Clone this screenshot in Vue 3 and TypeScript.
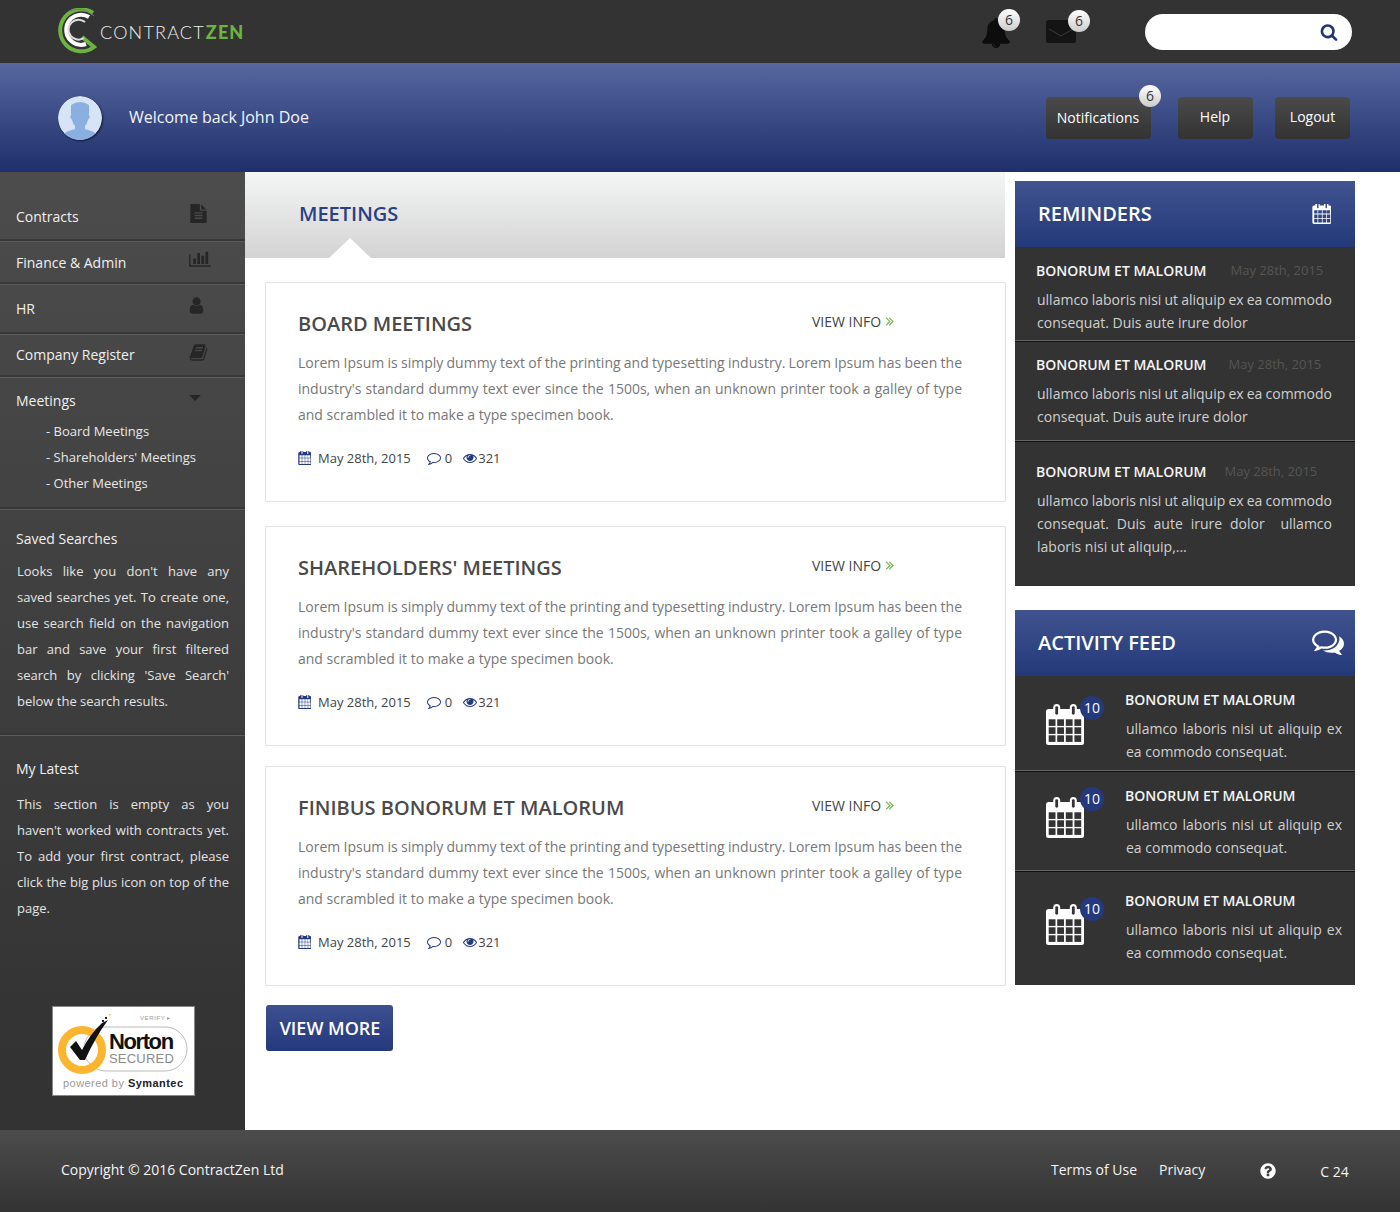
<script setup lang="ts">
const P = {
  cal: { vb: '0 128 1664 1664', d: 'M192 1664h288v-288h-288v288zm352 0h320v-288h-320v288zm-352-352h288v-320h-288v320zm352 0h320v-320h-320v320zm-352-384h288v-288h-288v288zm736 736h320v-288h-320v288zm-384-736h320v-288h-320v288zm768 736h288v-288h-288v288zm-384-352h320v-320h-320v320zm-352-864v-288q0-13-9.5-22.5t-22.5-9.5h-64q-13 0-22.5 9.5t-9.5 22.5v288q0 13 9.5 22.5t22.5 9.5h64q13 0 22.5-9.5t9.5-22.5zm736 864h288v-320h-288v320zm-384-384h320v-288h-320v288zm352 0h288v-288h-288v288zm32-480v-288q0-13-9.5-22.5t-22.5-9.5h-64q-13 0-22.5 9.5t-9.5 22.5v288q0 13 9.5 22.5t22.5 9.5h64q13 0 22.5-9.5t9.5-22.5zm384-64v1280q0 52-38 90t-90 38h-1408q-52 0-90-38t-38-90v-1280q0-52 38-90t90-38h128v-96q0-66 47-113t113-47h64q66 0 113 47t47 113v96h384v-96q0-66 47-113t113-47h64q66 0 113 47t47 113v96h128q52 0 90 38t38 90z' },
  search: { vb: '0 0 1792 1792', d: 'M1216 832q0-185-131.5-316.5t-316.5-131.5-316.5 131.5-131.5 316.5 131.5 316.5 316.5 131.5 316.5-131.5 131.5-316.5zm512 832q0 52-38 90t-90 38q-54 0-90-38l-343-342q-179 124-399 124-143 0-273.5-55.5t-225-150-150-225-55.5-273.5 55.5-273.5 150-225 225-150 273.5-55.5 273.5 55.5 225 150 150 225 55.5 273.5q0 220-124 399l343 343q37 37 37 90z' },
  bell: { vb: '0 0 1792 1792', d: 'M912 1696q0-16-16-16-59 0-101.5-42.5t-42.5-101.5q0-16-16-16t-16 16q0 73 51.5 124.5t124.5 51.5q16 0 16-16zm816-288q0 52-38 90t-90 38h-448q0 106-75 181t-181 75-181-75-75-181h-448q-52 0-90-38t-38-90q50-42 91-88t85-119.5 74.5-158.5 50-206 19.5-260q0-152 117-282.5t307-158.5q-8-19-8-39 0-40 28-68t68-28 68 28 28 68q0 20-8 39 190 28 307 158.5t117 282.5q0 139 19.5 260t50 206 74.5 158.5 85 119.5 91 88z' },
  file: { vb: '0 0 1792 1792', d: 'M1596 476q14 14 28 36h-472v-472q22 14 36 28zm-476 164h544v1056q0 40-28 68t-68 28h-1344q-40 0-68-28t-28-68v-1600q0-40 28-68t68-28h800v544q0 40 28 68t68 28zm160 736v-64q0-14-9-23t-23-9h-704q-14 0-23 9t-9 23v64q0 14 9 23t23 9h704q14 0 23-9t9-23zm0-256v-64q0-14-9-23t-23-9h-704q-14 0-23 9t-9 23v64q0 14 9 23t23 9h704q14 0 23-9t9-23zm0-256v-64q0-14-9-23t-23-9h-704q-14 0-23 9t-9 23v64q0 14 9 23t23 9h704q14 0 23-9t9-23z' },
  chart: { vb: '0 0 2048 1792', d: 'M640 896v512h-256v-512h256zm384-512v1024h-256v-1024h256zm1024 1152v128h-2048v-1152h128v1024h1920zm-640-896v768h-256v-768h256zm384-384v1152h-256v-1152h256z' },
  user: { vb: '0 0 1792 1792', d: 'M1536 1399q0 109-62.5 187t-150.5 78h-854q-88 0-150.5-78t-62.5-187q0-85 8.5-160.5t31.5-152 58.5-131 94-89 134.5-34.5q131 128 313 128t313-128q76 0 134.5 34.5t94 89 58.5 131 31.5 152 8.5 160.5zm-256-887q0 159-112.5 271.5t-271.5 112.5-271.5-112.5-112.5-271.5 112.5-271.5 271.5-112.5 271.5 112.5 112.5 271.5z' },
  book: { vb: '0 0 1664 1792', d: 'M1639 478q40 57 18 129l-275 906q-19 64-76.5 107.5t-122.5 43.5h-923q-77 0-148.5-53.5t-99.5-131.5q-24-67-2-127 0-4 3-27t4-37q1-8-3-21.5t-3-19.5q2-11 8-21t16.5-23.5 16.5-23.5q23-38 45-91.5t30-91.5q3-10 .5-30t-.5-28q3-11 17-28t17-23q21-36 42-92t25-90q1-9-2.5-32t.5-28q4-13 22-30.5t22-22.5q19-26 42.5-84.5t27.5-96.5q1-8-3-25.5t-2-26.5q2-8 9-18t18-23 17-21q8-12 16.5-30.5t15-35 16-36 19.5-32 26.5-23.5 36-11.5 47.5 5.5l-1 3q38-9 51-9h761q74 0 114 56t18 130l-274 906q-36 119-71.5 153.5t-128.5 34.5h-869q-27 0-38 15-11 16-1 43 24 70 144 70h923q29 0 56-15.5t35-41.5l300-987q7-22 5-57 38 15 59 43zm-1064 2q-4 13 2 22.5t20 9.5h608q13 0 25.5-9.5t16.5-22.5l21-64q4-13-2-22.5t-20-9.5h-608q-13 0-25.5 9.5t-16.5 22.5zm-83 256q-4 13 2 22.5t20 9.5h608q13 0 25.5-9.5t16.5-22.5l21-64q4-13-2-22.5t-20-9.5h-608q-13 0-25.5 9.5t-16.5 22.5z' },
  comment: { vb: '0 0 1792 1792', d: 'M896 384q-204 0-381.5 69.5t-282 187.5-104.5 255q0 112 71.5 213.5t201.5 175.5l87 50-27 96q-24 91-70 172 152-63 275-171l43-38 57 6q69 8 130 8 204 0 381.5-69.5t282-187.5 104.5-255-104.5-255-282-187.5-381.5-69.5zm896 512q0 174-120 321.5t-326 233-450 85.5q-70 0-145-8-198 175-460 242-49 14-114 22h-5q-15 0-27-10.5t-16-27.5v-1q-3-4-.5-12t2-10 4.5-9.5l6-9 7-8.5 8-9q7-8 31-34.5t34.5-38 31-39.5 32.5-51 27-59 26-76q-157-89-247.5-220t-90.5-281q0-174 120-321.5t326-233 450-85.5 450 85.5 326 233 120 321.5z' },
  comments: { vb: '0 0 1792 1792', d: 'M704 384q-153 0-286 52t-211.5 141-78.5 191q0 82 53 158t149 132l97 56-35 84q34-20 62-39l44-31 53 10q78 14 153 14 153 0 286-52t211.5-141 78.5-191-78.5-191-211.5-141-286-52zm0-128q191 0 353.5 68.5t256.5 186.5 94 257-94 257-256.5 186.5-353.5 68.5q-86 0-176-16-124 88-278 128-36 9-86 16h-3q-11 0-20.5-8t-11.5-21q-1-3-1-6.5t.5-6.5 2-6l2.5-5 3.5-5.5 4-5 4.5-5 4-4.5q5-6 23-25t26-29.5 22.5-29 25-38.5 20.5-44q-124-72-195-177t-71-224q0-139 94-257t256.5-186.5 353.5-68.5zm820 1133q10 24 20.5 44t25 38.5 22.5 29 26 29.5 23 25q1 1 4 4.5t4.5 5 4 5 3.5 5.5l2.5 5 2 6 .5 6.5-1 6.5q-3 14-13 22t-22 7q-50-7-86-16-154-40-278-128-90 16-176 16-271 0-472-132 58 4 88 4 161 0 309-45t264-129q125-92 192-212t67-254q0-77-23-152 129 71 204 178t75 230q0 120-71 224.5t-195 176.5z' },
  eye: { vb: '0 0 1792 1792', d: 'M1664 960q-152-236-381-353 61 104 61 225 0 185-131.5 316.5t-316.5 131.5-316.5-131.5-131.5-316.5q0-121 61-225-229 117-381 353 133 205 333.5 326.5t434.5 121.5 434.5-121.5 333.5-326.5zm-720-384q0-20-14-34t-34-14q-125 0-214.5 89.5t-89.5 214.5q0 20 14 34t34 14 34-14 14-34q0-86 61-147t147-61q20 0 34-14t14-34zm848 384q0 34-20 69-140 230-376.5 368.5t-499.5 138.5-499.5-139-376.5-368q-20-35-20-69t20-69q140-229 376.5-368t499.5-139 499.5 139 376.5 368q20 35 20 69z' },
  angles: { vb: '300 400 1100 1100', d: 'M979 960q0 13-10 23l-466 466q-10 10-23 10t-23-10l-50-50q-10-10-10-23t10-23l393-393-393-393q-10-10-10-23t10-23l50-50q10-10 23-10t23 10l466 466q10 10 10 23zm384 0q0 13-10 23l-466 466q-10 10-23 10t-23-10l-50-50q-10-10-10-23t10-23l393-393-393-393q-10-10-10-23t10-23l50-50q10-10 23-10t23 10l466 466q10 10 10 23z' },
  help: { vb: '0 0 1792 1792', d: 'M1024 1376v-192q0-14-9-23t-23-9h-192q-14 0-23 9t-9 23v192q0 14 9 23t23 9h192q14 0 23-9t9-23zm256-672q0-88-55.5-163t-138.5-116-170-41q-243 0-371 213-15 24 8 42l132 100q7 6 19 6 16 0 25-12 53-68 86-92 34-24 86-24 48 0 85.5 26t37.5 59q0 38-20 61t-68 45q-63 28-115.5 86.5t-52.5 125.5v36q0 14 9 23t23 9h192q14 0 23-9t9-23q0-19 21.5-49.5t54.5-49.5q32-18 49-28.5t46-35 44.5-48 28-60.5 12.5-81zm384 192q0 209-103 385.5t-279.5 279.5-385.5 103-385.5-103-279.5-279.5-103-385.5 103-385.5 279.5-279.5 385.5-103 385.5 103 279.5 279.5 103 385.5z' },
}

const nav = [
  { label: 'Contracts', icon: P.file, cls: 'n1' },
  { label: 'Finance & Admin', icon: P.chart, cls: 'n2' },
  { label: 'HR', icon: P.user, cls: 'n3' },
  { label: 'Company Register', icon: P.book, cls: 'n4' },
]
const subs = ['- Board Meetings', "- Shareholders' Meetings", '- Other Meetings']
const loremFirst = 'Lorem Ipsum is simply dummy text of the printing and typesetting industry. Lorem Ipsum has been the'
const loremRest = "industry's standard dummy text ever since the 1500s, when an unknown printer took a galley of type and scrambled it to make a type specimen book."
const cards = [
  { title: 'BOARD MEETINGS', cls: 'c1' },
  { title: "SHAREHOLDERS' MEETINGS", cls: 'c2' },
  { title: 'FINIBUS BONORUM ET MALORUM', cls: 'c3' },
]
const remFirst = 'ullamco laboris nisi ut aliquip ex ea commodo'
const reminders = [
  { cls: 'r1', text: 'consequat. Duis aute irure dolor' },
  { cls: 'r2', text: 'consequat. Duis aute irure dolor' },
  { cls: 'r3', text: 'consequat. Duis aute irure dolor  ullamco laboris nisi ut aliquip,...' },
]
const feed = ['f1', 'f2', 'f3']
const cols = [2.7, 11.2, 19.8, 28.4]
const rows = [15.3, 23.3, 31.3]
</script>

<template>
  <div class="page">
    <header class="top">
      <div class="logo">
        <svg class="logo-mark" viewBox="3 0 44 48" width="44" height="48">
          <path d="M38 5 A21 21 0 1 0 39 39 L27 29" fill="none" stroke="#6cb33f" stroke-width="4" />
          <path d="M34 9 A15 15 0 1 0 31 36" fill="none" stroke="#fff" stroke-width="4" />
          <path d="M30 14 A10 10 0 1 0 29 30" fill="none" stroke="#ddd" stroke-width="2" />
          <path d="M14 3 A22 22 0 0 1 39 8" fill="none" stroke="#777" stroke-width="1" />
        </svg>
        <span class="logo-a">CONTRACT</span><span class="logo-b">ZEN</span>
      </div>
      <div class="alert a-bell">
        <svg class="bell" :viewBox="P.bell.vb"><path :d="P.bell.d" /></svg>
        <span class="bubble">6</span>
      </div>
      <div class="alert a-mail">
        <svg class="mail" viewBox="0 0 30 24">
          <rect width="30" height="23" rx="2.5" fill="#141414" />
          <path d="M3 9 L15 16 L27 9" fill="none" stroke="#3a3a3a" stroke-width="1" />
        </svg>
        <span class="bubble">6</span>
      </div>
      <div class="search">
        <svg class="search-ico" :viewBox="P.search.vb"><path :d="P.search.d" /></svg>
      </div>
    </header>

    <section class="welcome">
      <div class="avatar">
        <svg viewBox="0 0 44 44" width="44" height="44">
          <circle cx="22" cy="22" r="22" fill="#d6e4f6" />
          <path d="M13 9 Q22 3 31 9 L31 19 L32 21 L30 24 Q29 28 27 30 L27 33 Q36 35 40 39 A22 22 0 0 1 4 39 Q8 35 17 33 L17 30 Q15 28 14 24 L12 21 L13 19 Z" fill="#8cafe2" />
        </svg>
      </div>
      <div class="hello">Welcome back John Doe</div>
      <div class="btn b-notif">Notifications<span class="bubble">6</span></div>
      <div class="btn b-help">Help</div>
      <div class="btn b-out">Logout</div>
    </section>

    <div class="main">
      <aside class="side">
        <div v-for="n in nav" :key="n.label" class="nav" :class="n.cls">
          <span>{{ n.label }}</span>
          <svg class="nav-ico" :viewBox="n.icon.vb"><path :d="n.icon.d" /></svg>
        </div>
        <div class="nav n5">
          <span>Meetings</span>
          <i class="caret"></i>
        </div>
        <div class="subs">
          <div v-for="s in subs" :key="s" class="sub">{{ s }}</div>
        </div>
        <div class="block b-saved">
          <h4>Saved Searches</h4>
          <p>Looks like you don't have any saved searches yet. To create one, use search field on the navigation bar and save your first filtered search by clicking 'Save Search' below the search results.</p>
        </div>
        <div class="block b-latest">
          <h4>My Latest</h4>
          <p>This section is empty as you haven't worked with contracts yet. To add your first contract, please click the big plus icon on top of the page.</p>
        </div>
        <div class="norton">
          <svg viewBox="0 0 143 90" width="143" height="90">
            <rect width="143" height="90" fill="#fff" />
            <text x="88" y="14" class="nt-v">VERIFY ▸</text>
            <rect x="32" y="21" width="103" height="44" rx="22" fill="#fff" stroke="#bbb" stroke-width="1" />
            <circle cx="30" cy="44" r="20" fill="none" stroke="#fcb52f" stroke-width="8" />
            <path d="M18 41 L24 35 L30 44 Q38 28 50 17 L56 14 Q44 30 33 54 L28 54 Z" fill="#111" />
            <rect x="53" y="11" width="2" height="2" fill="#222" />
            <rect x="50" y="14" width="2" height="2" fill="#222" />
            <rect x="57" y="8" width="1.5" height="1.5" fill="#fcb52f" />
            <text x="57" y="43" class="nt-n">Norton</text>
            <text x="57" y="57" class="nt-s">SECURED</text>
            <text x="11" y="81" class="nt-p">powered by <tspan class="nt-y">Symantec</tspan></text>
          </svg>
        </div>
      </aside>

      <main class="content">
        <div class="banner"><h1>MEETINGS</h1><i class="notch"></i></div>
        <article v-for="c in cards" :key="c.title" class="card" :class="c.cls">
          <div class="card-head">
            <h2>{{ c.title }}</h2>
            <a class="info">VIEW INFO <svg class="angles" :viewBox="P.angles.vb"><path :d="P.angles.d" /></svg></a>
          </div>
          <div class="lorem">
            <span class="tight">{{ loremFirst }}</span>
            <p>{{ loremRest }}</p>
          </div>
          <div class="meta">
            <svg class="m-cal" :viewBox="P.cal.vb" preserveAspectRatio="none"><path :d="P.cal.d" /></svg>
            <span class="m-date">May 28th, 2015</span>
            <svg class="m-com" :viewBox="P.comment.vb"><path :d="P.comment.d" /></svg>
            <span class="m-zero">0</span>
            <svg class="m-eye" :viewBox="P.eye.vb"><path :d="P.eye.d" /></svg>
            <span>321</span>
          </div>
        </article>
        <a class="more">VIEW MORE</a>
      </main>

      <aside class="right">
        <section class="panel">
          <header class="p-head">
            <span>REMINDERS</span>
            <svg class="p-cal" :viewBox="P.cal.vb" preserveAspectRatio="none"><path :d="P.cal.d" /></svg>
          </header>
          <div v-for="r in reminders" :key="r.cls" class="rem" :class="r.cls">
            <div class="rem-top"><b>BONORUM ET MALORUM</b><span>May 28th, 2015</span></div>
            <div class="rem-text">
              <span class="tight2">{{ remFirst }}</span>
              <p>{{ r.text }}</p>
            </div>
          </div>
        </section>
        <section class="panel p2">
          <header class="p-head">
            <span>ACTIVITY FEED</span>
            <svg class="p-com" :viewBox="P.comments.vb"><path :d="P.comments.d" /></svg>
          </header>
          <div v-for="f in feed" :key="f" class="act" :class="f">
            <div class="act-ico">
              <svg viewBox="0 0 38 41">
                <path d="M2.5 5 H35.5 Q38 5 38 7.5 V38.5 Q38 41 35.5 41 H2.5 Q0 41 0 38.5 V7.5 Q0 5 2.5 5 Z" fill="#fff" />
                <rect x="7.2" y="0" width="7" height="10" rx="3.5" fill="#fff" stroke="#333" stroke-width="0" />
                <rect x="23.8" y="0" width="7" height="10" rx="3.5" fill="#fff" />
                <rect x="9.3" y="2.2" width="2.8" height="8.5" rx="1.4" fill="#333" />
                <rect x="25.9" y="2.2" width="2.8" height="8.5" rx="1.4" fill="#333" />
                <template v-for="y in rows" :key="y">
                  <rect v-for="x in cols" :key="x" :x="x" :y="y" width="6.8" height="6.6" fill="#333" />
                </template>
              </svg>
              <span class="count">10</span>
            </div>
            <div class="act-body">
              <b>BONORUM ET MALORUM</b>
              <p>ullamco laboris nisi ut aliquip ex ea commodo consequat.</p>
            </div>
          </div>
        </section>
      </aside>
    </div>

    <footer class="foot">
      <span class="copy">Copyright © 2016 ContractZen Ltd</span>
      <a class="terms">Terms of Use</a>
      <a class="priv">Privacy</a>
      <svg class="q" :viewBox="P.help.vb"><path :d="P.help.d" /></svg>
      <span class="ver">C 24</span>
    </footer>
  </div>
</template>

<style scoped>
.page { width: 1400px; height: 1212px; font-family: "Open Sans", sans-serif; color: #444; background: #fff; overflow: hidden; }
h1, h2, h4, p { margin: 0; }
svg { display: block; fill: currentColor; }

.top { height: 63px; background: #333; display: flex; align-items: center; padding-left: 58px; box-sizing: border-box; }
.logo { display: flex; align-items: center; width: 923px; height: 63px; }
.logo-mark { flex: none; margin-right: -2px; margin-top: 1px; }
.logo-a { font: 300 18px/1 Lato, sans-serif; color: #eee; letter-spacing: 1.2px; }
.logo-b { font: 900 18px/1 Lato, sans-serif; color: #6cb33f; letter-spacing: 1.1px; margin-left: 1px; }
.alert { position: relative; color: #0d0d0d; }
.a-bell { width: 30px; }
.a-mail { width: 30px; margin-left: 35px; }
.bell { width: 30px; height: 30px; margin-top: 3px; }
.mail { width: 30px; height: 24px; margin-top: 1px; }
.bubble { position: absolute; width: 22px; height: 22px; border-radius: 50%; background: linear-gradient(#fff, #ccc); color: #333; font-size: 14px; line-height: 22px; text-align: center; }
.a-bell .bubble { left: 17px; top: -6px; }
.a-mail .bubble { left: 22px; top: -9px; }
.search { width: 207px; height: 36px; border-radius: 18px; background: #fff; margin-left: 69px; display: flex; align-items: center; justify-content: flex-end; padding-right: 14px; box-sizing: border-box; color: #1f3575; }
.search-ico { width: 18px; height: 18px; }

.welcome { height: 109px; background: linear-gradient(#56669f, #1f2f6b); display: flex; align-items: center; padding-left: 58px; box-sizing: border-box; }
.avatar { width: 44px; height: 44px; border-radius: 50%; box-shadow: 1px 1px 2px rgba(0,0,0,.6); overflow: hidden; }
.hello { color: #f2f4fa; font-size: 16px; margin: -2px 0 0 27px; width: 917px; }
.btn { position: relative; height: 42px; border-radius: 4px; background: linear-gradient(#4a4a4a, #333); color: #fff; font-size: 14px; display: flex; align-items: center; justify-content: center; padding-bottom: 2px; box-sizing: border-box; }
.b-notif { width: 105px; padding-bottom: 0; padding-right: 1px; }
.b-help { width: 75px; margin-left: 27px; padding-right: 1px; }
.b-out { width: 75px; margin-left: 22px; }
.b-notif .bubble { right: -10px; top: -12px; }

.main { display: flex; height: 958px; }
.side { width: 245px; flex: none; background: linear-gradient(#4c4c4c, #333 92%); color: #f0f0f0; position: relative; }
.nav { display: flex; justify-content: space-between; align-items: center; padding: 0 38px 0 16px; font-size: 14px; box-sizing: border-box; border-bottom: 2px solid #383838; box-shadow: 0 1px 0 #5c5c5c; position: relative; }
.n1 { height: 69px; padding-top: 22px; }
.n2 { height: 43px; padding-top: 1px; }
.n3 { height: 50px; }
.n4 { height: 43px; padding-bottom: 1px; }
.n5 { height: 46px; border: 0; box-shadow: none; }
.nav-ico { color: #262626; width: 19px; height: 19px; margin: -7px -1px 0 0; }
.n2 .nav-ico { width: 22px; margin: -7px -4px 0 0; }
.n3 .nav-ico { margin: -5px 1px 0 0; }
.n4 .nav-ico { margin: -4px -1px 0 0; }
.caret { width: 0; height: 0; border: 6px solid transparent; border-top: 6px solid #262626; border-bottom: 0; margin-top: -4px; margin-right: 6px; }
.subs { padding: 0 0 11px 46px; border-bottom: 2px solid #383838; box-shadow: 0 1px 0 #5c5c5c; margin-top: -5px; }
.sub { font-size: 13px; line-height: 26px; color: #e8e8e8; }
.block { box-sizing: border-box; padding: 0 16px 0 17px; }
.block h4 { font-size: 14px; font-weight: 400; line-height: 20px; margin-left: -1px; }
.block p { font-size: 13px; line-height: 26px; text-align: justify; color: #e4e4e4; margin-top: 9px; }
.b-saved { padding-top: 20px; height: 226px; border-bottom: 2px solid #383838; box-shadow: 0 1px 0 #5c5c5c; }
.b-latest { padding-top: 24px; }
.b-latest p { margin-top: 12px; }
.norton { position: absolute; left: 52px; top: 834px; outline: 1px solid #888; outline-offset: -1px; }
.nt-v { font: 6px "Liberation Sans", sans-serif; fill: #999; letter-spacing: .6px; }
.nt-n { font: 700 22px "Liberation Sans", sans-serif; fill: #111; letter-spacing: -1.4px; }
.nt-s { font: 13px "Liberation Sans", sans-serif; fill: #8a8a8a; letter-spacing: .2px; }
.nt-p { font: 11px "Liberation Sans", sans-serif; fill: #999; letter-spacing: .45px; }
.nt-y { font-weight: 700; fill: #222; }

.content { width: 760px; flex: none; }
.banner { height: 86px; background: linear-gradient(#f4f5f5, #d3d3d3); position: relative; padding: 30px 0 0 54px; box-sizing: border-box; }
.banner h1 { font-size: 20px; line-height: 24px; font-weight: 600; color: #2a3f85; }
.notch { position: absolute; left: 84px; bottom: 0; width: 0; height: 0; border-left: 21px solid transparent; border-right: 21px solid transparent; border-bottom: 20px solid #fff; }
.card { margin-left: 20px; width: 741px; height: 220px; box-sizing: border-box; border: 1px solid #e2e2e2; padding: 27px 32px 0; border-radius: 1px; }
.c1 { margin-top: 24px; }
.c2 { margin-top: 24px; }
.c3 { margin-top: 20px; }
.card-head { display: flex; height: 28px; align-items: center; }
.card-head h2 { font-size: 20px; font-weight: 600; color: #4a4a4a; width: 514px; flex: none; line-height: 28px; }
.info { display: flex; align-items: center; gap: 4px; font-size: 14px; color: #444; margin-top: -6px; }
.angles { width: 9px; height: 9px; color: #6cb33f; }
.lorem { margin-top: 12px; width: 664px; font-size: 14px; line-height: 26px; color: #777; text-align: justify; }
.tight { display: block; white-space: nowrap; text-align-last: justify; word-spacing: -0.4px; }
.meta { display: flex; align-items: center; font-size: 13px; color: #444; margin-top: 20px; height: 20px; }
.m-cal { width: 13px; height: 14px; color: #25397f; margin-right: 7px; }
.m-com { width: 14px; height: 14px; color: #25397f; margin-left: 16px; margin-right: 4px; }
.m-eye { width: 14px; height: 14px; color: #25397f; margin-left: 11px; margin-right: 1px; }
.more { display: flex; align-items: center; justify-content: center; margin: 19px 0 0 21px; width: 127px; height: 46px; padding-left: 1px; box-sizing: border-box; border-radius: 3px; background: linear-gradient(#3c5091, #24387c); color: #fff; font-size: 18px; font-weight: 600; }

.right { width: 340px; margin-left: 10px; padding-top: 9px; flex: none; }
.panel { background: #333; }
.p2 { margin-top: 24px; }
.p-head { height: 66px; background: linear-gradient(#40538f, #243979); color: #fff; display: flex; align-items: center; justify-content: space-between; padding: 0 24px 2px 23px; font-size: 20px; font-weight: 600; box-sizing: border-box; }
.p-cal { width: 19px; height: 20px; margin-top: 2px; }
.p-com { width: 32px; height: 32px; margin-right: -13px; }
.rem { box-sizing: border-box; padding: 0 23px 0 21px; color: #d0d0d0; border-bottom: 1px solid #666; box-shadow: 0 1px 0 #111; position: relative; }
.rem-top { display: flex; align-items: center; height: 20px; }
.rem-top b { font-weight: 600; font-size: 14px; color: #f4f4f4; }
.rem-top span { font-size: 13px; color: #555; }
.rem-text { font-size: 14px; line-height: 23px; text-align: justify; margin: 8px 0 0 1px; }
.rem-text p { white-space: pre-wrap; }
.tight2 { display: block; white-space: nowrap; text-align-last: justify; word-spacing: -1.2px; }
.r1 { height: 94px; padding-top: 13px; }
.r1 .rem-top span { margin-left: 24px; }
.r2 { height: 99px; padding-top: 12px; margin-top: 1px; }
.r2 .rem-top span { margin-left: 22px; }
.r3 { height: 144px; padding-top: 19px; margin-top: 1px; border: 0; box-shadow: none; }
.r3 .rem-top span { margin-left: 18px; }
.act { display: flex; box-sizing: border-box; border-bottom: 1px solid #666; box-shadow: 0 1px 0 #111; position: relative; }
.f1 { height: 95px; padding-top: 14px; }
.f2 { height: 99px; padding-top: 14px; margin-top: 1px; }
.f3 { height: 113px; padding-top: 19px; margin-top: 1px; border: 0; box-shadow: none; }
.act-ico { position: relative; width: 110px; flex: none; color: #fff; }
.act-ico svg { width: 38px; height: 41px; margin: 14px 0 0 31px; }
.f2 .act-ico svg { margin-top: 11px; }
.f3 .act-ico svg { margin-top: 13px; }
.count { position: absolute; left: 65px; top: 6px; width: 24px; height: 24px; border-radius: 50%; background: #25397f; color: #fff; font-size: 14px; line-height: 24px; text-align: center; }
.f2 .count { top: 1px; }
.act-body { width: 217px; }
.act-body b { display: block; font-weight: 600; font-size: 14px; color: #f4f4f4; line-height: 20px; }
.act-body p { font-size: 14px; line-height: 23px; color: #d0d0d0; text-align: justify; margin: 7px 0 0 1px; }

.foot { height: 82px; background: linear-gradient(#4c4c4c, #333); color: #f4f4f4; font-size: 14px; display: flex; align-items: center; box-sizing: border-box; padding-left: 61px; }
.copy, .terms, .priv { margin-bottom: 4px; }
.copy { width: 990px; }
.priv { margin-left: 22px; }
.q { width: 18px; height: 18px; margin-left: 54px; color: #fff; }
.ver { margin-left: 43px; }
</style>
